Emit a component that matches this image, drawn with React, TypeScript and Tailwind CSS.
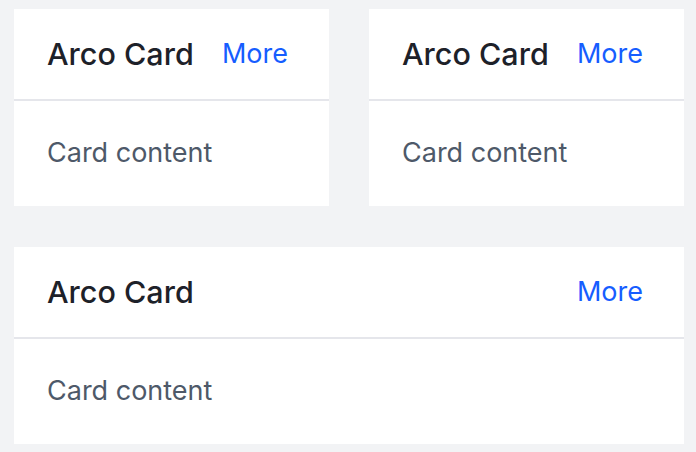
function Card({ title = "Arco Card", wide = false }: { title?: string; wide?: boolean }) {
  return (
    <div className={`bg-white ${wide ? "col-span-2" : ""}`}>
      <div className="flex h-[92px] items-center justify-between border-b-2 border-[#e5e6eb] pl-[33px] pr-[41px]">
        <span className="text-[30.5px] font-medium text-[#1d2129]">{title}</span>
        <a className="text-[27px] text-[#165dff]" href="#">
          More
        </a>
      </div>
      <div className="flex h-[105px] items-center pl-[33px] text-[27px] text-[#4e5969]">
        Card content
      </div>
    </div>
  );
}

export default function App() {
  return (
    <div
      className="min-h-screen bg-[#f2f3f5] pl-[14px] pt-[9px]"
      style={{ fontFamily: "Inter, 'Liberation Sans', sans-serif" }}
    >
      <div className="grid w-[670px] grid-cols-2 gap-x-[40px] gap-y-[41px]">
        <Card />
        <Card />
        <Card wide />
      </div>
    </div>
  );
}
